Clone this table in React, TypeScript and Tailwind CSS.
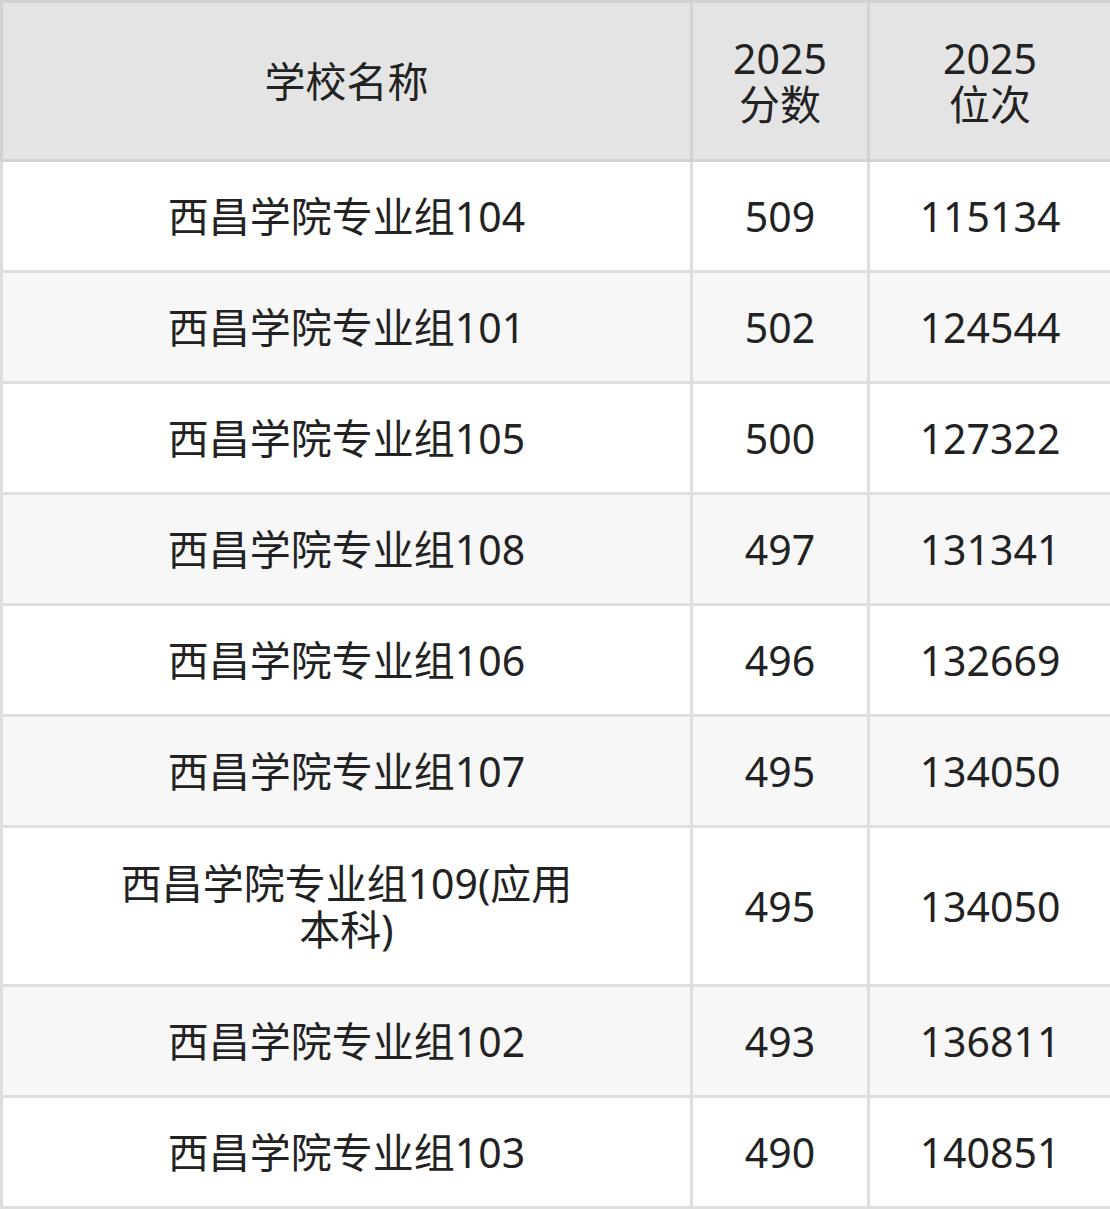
import React from 'react';

const rows = [
  { name: '西昌学院专业组104', score: '509', rank: '115134' },
  { name: '西昌学院专业组101', score: '502', rank: '124544' },
  { name: '西昌学院专业组105', score: '500', rank: '127322' },
  { name: '西昌学院专业组108', score: '497', rank: '131341' },
  { name: '西昌学院专业组106', score: '496', rank: '132669' },
  { name: '西昌学院专业组107', score: '495', rank: '134050' },
  { name: '西昌学院专业组109(应用本科)', score: '495', rank: '134050' },
  { name: '西昌学院专业组102', score: '493', rank: '136811' },
  { name: '西昌学院专业组103', score: '490', rank: '140851' },
];

export default function App() {
  return (
    <div className="w-[1110px] bg-white font-['Noto_Sans','Noto_Sans_CJK_SC',sans-serif] text-[#222] text-[41px] leading-[46px]">
      <table className="w-[1110px] table-fixed border-collapse">
        <colgroup>
          <col className="w-[690px]" />
          <col className="w-[177px]" />
          <col className="w-[243px]" />
        </colgroup>
        <thead>
          <tr className="bg-[#e4e4e4]">
            <th className="h-[159px] border-[3px] border-[#d2d2d2] font-normal text-center">学校名称</th>
            <th className="border-[3px] border-[#d2d2d2] font-normal text-center">
              2025
              <br />
              分数
            </th>
            <th className="border-[3px] border-[#d2d2d2] font-normal text-center">
              2025
              <br />
              位次
            </th>
          </tr>
        </thead>
        <tbody>
          {rows.map((item, index) => (
            <tr key={index} className={index % 2 === 1 ? 'bg-[#f7f7f7]' : 'bg-white'}>
              <td
                className={
                  (item.name.length > 12 ? 'h-[159px]' : 'h-[111px]') +
                  ' border-[3px] border-[#dedede] px-[112px] text-center'
                }
              >
                {item.name}
              </td>
              <td className="border-[3px] border-[#dedede] text-center">{item.score}</td>
              <td className="border-[3px] border-[#dedede] text-center">{item.rank}</td>
            </tr>
          ))}
        </tbody>
      </table>
    </div>
  );
}
